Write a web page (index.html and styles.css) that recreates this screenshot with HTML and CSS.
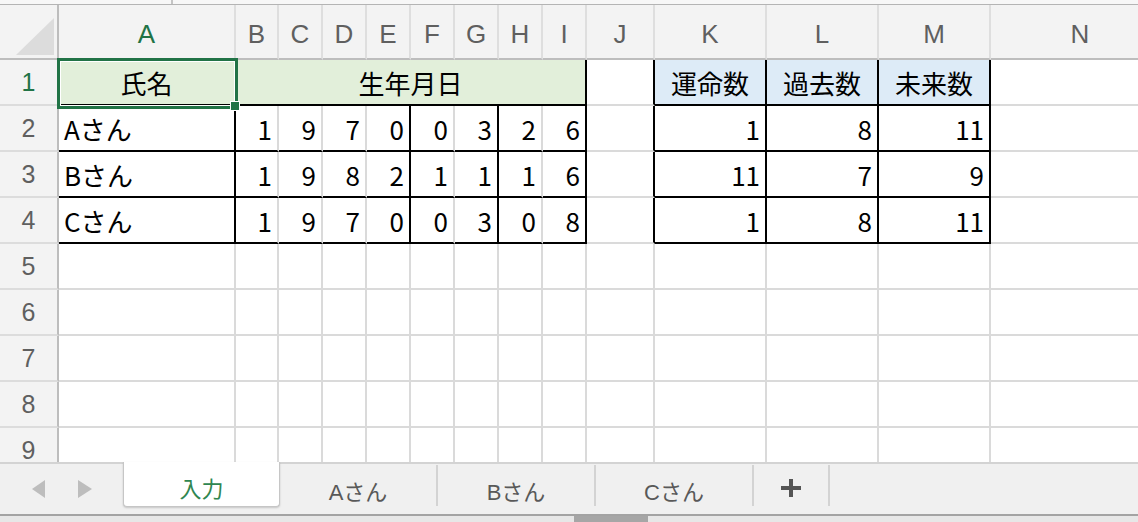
FILE: index.html
```html
<!DOCTYPE html>
<html lang="ja">
<head>
    <meta charset="UTF-8">
    <title>運命数</title>
    <link rel="stylesheet" href="styles.css">
</head>
<body>
<div class="window">
    <div class="formula-edge"><span class="name-box"></span></div>

    <div class="sheet">
        <!-- column headers -->
        <div class="corner">
            <svg width="38" height="37" viewBox="0 0 38 37"><polygon points="0,37 38,37 38,0" fill="#dcdcdc"/></svg>
        </div>
        <div class="ch on">A</div>
        <div class="ch">B</div>
        <div class="ch">C</div>
        <div class="ch">D</div>
        <div class="ch">E</div>
        <div class="ch">F</div>
        <div class="ch">G</div>
        <div class="ch">H</div>
        <div class="ch">I</div>
        <div class="ch">J</div>
        <div class="ch">K</div>
        <div class="ch">L</div>
        <div class="ch">M</div>
        <div class="ch">N</div>

        <!-- row 1 -->
        <div class="rh on">1</div>
        <div class="c green kb kr mid sel">氏名<div class="selection"><span class="handle"></span></div></div>
        <div class="c green kb kr mid span8">生年月日</div>
        <div class="c kr"></div>
        <div class="c blue kb kr mid">運命数</div>
        <div class="c blue kb kr mid">過去数</div>
        <div class="c blue kb kr mid">未来数</div>
        <div class="c"></div>

        <!-- row 2 -->
        <div class="rh">2</div>
        <div class="c kb kr">Aさん</div>
        <div class="c kb num">1</div>
        <div class="c kb num">9</div>
        <div class="c kb num">7</div>
        <div class="c kb kr num">0</div>
        <div class="c kb num">0</div>
        <div class="c kb kr num">3</div>
        <div class="c kb num">2</div>
        <div class="c kb kr num">6</div>
        <div class="c kr"></div>
        <div class="c kb kr num">1</div>
        <div class="c kb kr num">8</div>
        <div class="c kb kr num">11</div>
        <div class="c"></div>

        <!-- row 3 -->
        <div class="rh">3</div>
        <div class="c kb kr">Bさん</div>
        <div class="c kb num">1</div>
        <div class="c kb num">9</div>
        <div class="c kb num">8</div>
        <div class="c kb kr num">2</div>
        <div class="c kb num">1</div>
        <div class="c kb kr num">1</div>
        <div class="c kb num">1</div>
        <div class="c kb kr num">6</div>
        <div class="c kr"></div>
        <div class="c kb kr num">11</div>
        <div class="c kb kr num">7</div>
        <div class="c kb kr num">9</div>
        <div class="c"></div>

        <!-- row 4 -->
        <div class="rh">4</div>
        <div class="c kb kr">Cさん</div>
        <div class="c kb num">1</div>
        <div class="c kb num">9</div>
        <div class="c kb num">7</div>
        <div class="c kb kr num">0</div>
        <div class="c kb num">0</div>
        <div class="c kb kr num">3</div>
        <div class="c kb num">0</div>
        <div class="c kb kr num">8</div>
        <div class="c kr"></div>
        <div class="c kb kr num">1</div>
        <div class="c kb kr num">8</div>
        <div class="c kb kr num">11</div>
        <div class="c"></div>

        <!-- empty rows -->
        <div class="rh">5</div>
        <div class="c"></div><div class="c"></div><div class="c"></div><div class="c"></div><div class="c"></div><div class="c"></div><div class="c"></div>
        <div class="c"></div><div class="c"></div><div class="c"></div><div class="c"></div><div class="c"></div><div class="c"></div><div class="c"></div>
        <div class="rh">6</div>
        <div class="c"></div><div class="c"></div><div class="c"></div><div class="c"></div><div class="c"></div><div class="c"></div><div class="c"></div>
        <div class="c"></div><div class="c"></div><div class="c"></div><div class="c"></div><div class="c"></div><div class="c"></div><div class="c"></div>
        <div class="rh">7</div>
        <div class="c"></div><div class="c"></div><div class="c"></div><div class="c"></div><div class="c"></div><div class="c"></div><div class="c"></div>
        <div class="c"></div><div class="c"></div><div class="c"></div><div class="c"></div><div class="c"></div><div class="c"></div><div class="c"></div>
        <div class="rh">8</div>
        <div class="c"></div><div class="c"></div><div class="c"></div><div class="c"></div><div class="c"></div><div class="c"></div><div class="c"></div>
        <div class="c"></div><div class="c"></div><div class="c"></div><div class="c"></div><div class="c"></div><div class="c"></div><div class="c"></div>
        <div class="rh">9</div>
        <div class="c"></div><div class="c"></div><div class="c"></div><div class="c"></div><div class="c"></div><div class="c"></div><div class="c"></div>
        <div class="c"></div><div class="c"></div><div class="c"></div><div class="c"></div><div class="c"></div><div class="c"></div><div class="c"></div>
    </div>

    <div class="tabbar">
        <div class="nav">
            <svg width="123" height="50" viewBox="0 0 123 50">
                <polygon points="45,16 45,34 32,25" fill="#bdbdbd"/>
                <polygon points="78,16 78,34 92,25" fill="#bdbdbd"/>
            </svg>
        </div>
        <div class="tab active">入力</div>
        <div class="tab">Aさん</div>
        <div class="tab">Bさん</div>
        <div class="tab">Cさん</div>
        <div class="tab add">
            <svg width="20" height="18" viewBox="0 0 20 18"><rect x="8" y="0" width="4" height="18" fill="#555"/><rect x="0" y="7" width="20" height="4" fill="#555"/></svg>
        </div>
    </div>

    <div class="hscroll"><div class="thumb"></div></div>
</div>
</body>
</html>
```

FILE: styles.css
```css
* {
    box-sizing: border-box;
}
body {
    margin: 0;
    font-family: "Liberation Sans", "Noto Sans CJK JP", sans-serif;
    background-color: #fff;
    overflow: hidden;
}
.window {
    width: 1138px;
    height: 522px;
    display: flex;
    flex-direction: column;
    overflow: hidden;
}
.formula-edge {
    flex: none;
    height: 5px;
    display: flex;
    background-color: #f7f7f7;
    border-bottom: 1px solid #b4b4b4;
}
.name-box {
    width: 173px;
    border-right: 2px solid #c4c4c4;
}

/* grid */
.sheet {
    flex: none;
    width: 1171px;
    height: 457px;
    overflow: hidden;
    display: grid;
    grid-template-columns: 59px 177px 43px repeat(7, 44px) 68px repeat(3, 112px) 180px;
    grid-template-rows: 55px;
    grid-auto-rows: 46px;
}
.corner {
    background-color: #f3f3f3;
    border-right: 2px solid #bdbdbd;
    border-bottom: 2px solid #bdbdbd;
    display: flex;
    align-items: flex-end;
    justify-content: flex-end;
    padding: 0 3px 3px 0;
}
.corner svg {
    display: block;
}
.ch {
    background-color: #f3f3f3;
    border-right: 2px solid #dedede;
    border-bottom: 2px solid #bdbdbd;
    color: #5f5f5f;
    font-size: 26px;
    display: flex;
    align-items: center;
    justify-content: center;
    padding-top: 6px;
}
.rh {
    background-color: #f3f3f3;
    border-right: 2px solid #bdbdbd;
    border-bottom: 2px solid #dcdcdc;
    color: #5f5f5f;
    font-size: 25px;
    display: flex;
    align-items: center;
    justify-content: center;
}
.ch.on, .rh.on {
    color: #217346;
}
.c {
    border-right: 2px solid #dadada;
    border-bottom: 2px solid #dadada;
    font-family: "Noto Sans CJK JP", sans-serif;
    font-size: 26px;
    color: #000;
    display: flex;
    align-items: center;
    padding: 0 5px;
    white-space: nowrap;
}
.num {
    justify-content: flex-end;
}
.mid {
    justify-content: center;
}
.kr {
    border-right-color: #000;
}
.kb {
    border-bottom-color: #000;
}
.green {
    background-color: #e2efda;
}
.blue {
    background-color: #ddebf7;
}
.span8 {
    grid-column: span 8;
}

/* active cell */
.sel {
    position: relative;
}
.selection {
    position: absolute;
    left: -2px;
    top: -2px;
    width: 181px;
    height: 51px;
    border: 3px solid #217346;
    box-shadow: inset 0 0 0 1px #fff;
}
.handle {
    position: absolute;
    right: -5px;
    bottom: -5px;
    width: 10px;
    height: 10px;
    background-color: #217346;
    border: 1px solid #fff;
}

/* sheet tabs */
.tabbar {
    flex: none;
    height: 52px;
    display: flex;
    align-items: flex-start;
    background-color: #f0f0f0;
    border-top: 2px solid #d3d3d3;
}
.nav {
    width: 123px;
    height: 50px;
}
.nav svg {
    display: block;
}
.tab {
    width: 158px;
    height: 41px;
    margin-top: 1px;
    border-right: 2px solid #d3d3d3;
    display: flex;
    align-items: flex-end;
    justify-content: center;
    font-size: 22px;
    line-height: 26px;
    color: #595959;
}
.tab.active {
    width: 157px;
    height: 45px;
    margin-top: -2px;
    padding-top: 12px;
    align-items: center;
    background-color: #fff;
    border: 1px solid #c6c6c6;
    border-top: none;
    border-radius: 0 0 4px 4px;
    box-shadow: 0 1px 2px rgba(0, 0, 0, 0.18);
    color: #2f8650;
}
.tab.add {
    width: 76px;
    align-items: center;
    padding-top: 5px;
}
.hscroll {
    flex: none;
    height: 8px;
    border-top: 2px solid #a3a3a3;
    background-color: #e7e7e7;
    padding-left: 574px;
}
.thumb {
    width: 74px;
    height: 6px;
    background-color: #a6a6a6;
}
```
